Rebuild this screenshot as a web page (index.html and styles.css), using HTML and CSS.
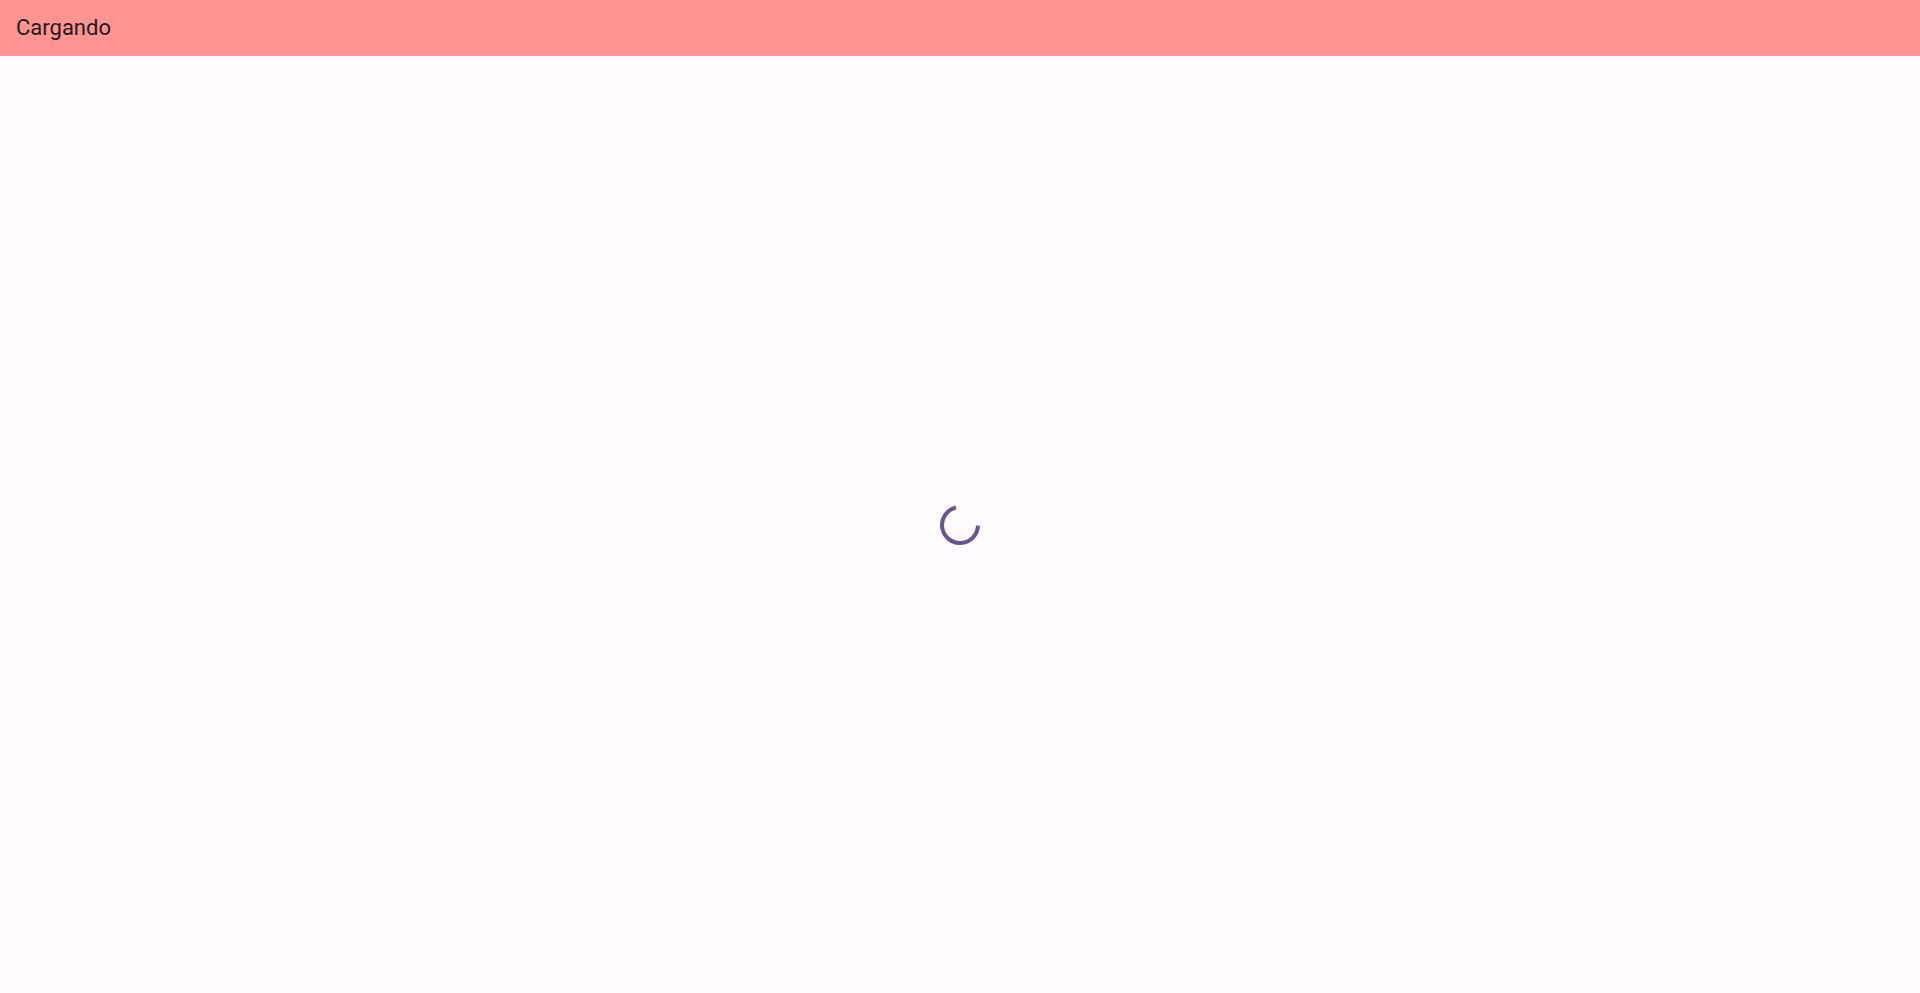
FILE: index.html
```html
<!DOCTYPE html>
<html lang="es">
<head>
<meta charset="utf-8">
<title>Cargando</title>
<link rel="stylesheet" href="styles.css">
</head>
<body>
<header class="app-bar">
  <h1 class="app-title">Cargando</h1>
</header>
<main class="content">
  <svg class="spinner" width="40" height="40" viewBox="0 0 40 40" aria-label="Cargando">
    <path d="M15.95 2.47 A18 18 0 1 0 37.99 20.63" fill="none" stroke="#65558f" stroke-width="4" stroke-linecap="butt"/>
  </svg>
</main>
</body>
</html>
```
FILE: styles.css
```css
html, body {
  margin: 0;
  padding: 0;
  height: 100%;
}
body {
  background: #fffbfe;
  font-family: Roboto, "Noto Sans", sans-serif;
  display: flex;
  flex-direction: column;
}
.app-bar {
  height: 56px;
  flex: 0 0 56px;
  background: #ff9492;
  display: flex;
  align-items: center;
  padding: 0 16px;
}
.app-title {
  margin: 0;
  font-size: 22px;
  font-weight: 400;
  color: #1d1b20;
  line-height: 28px;
}
.content {
  flex: 1;
  display: flex;
  align-items: center;
  justify-content: center;
}
.spinner {
  display: block;
}
```
